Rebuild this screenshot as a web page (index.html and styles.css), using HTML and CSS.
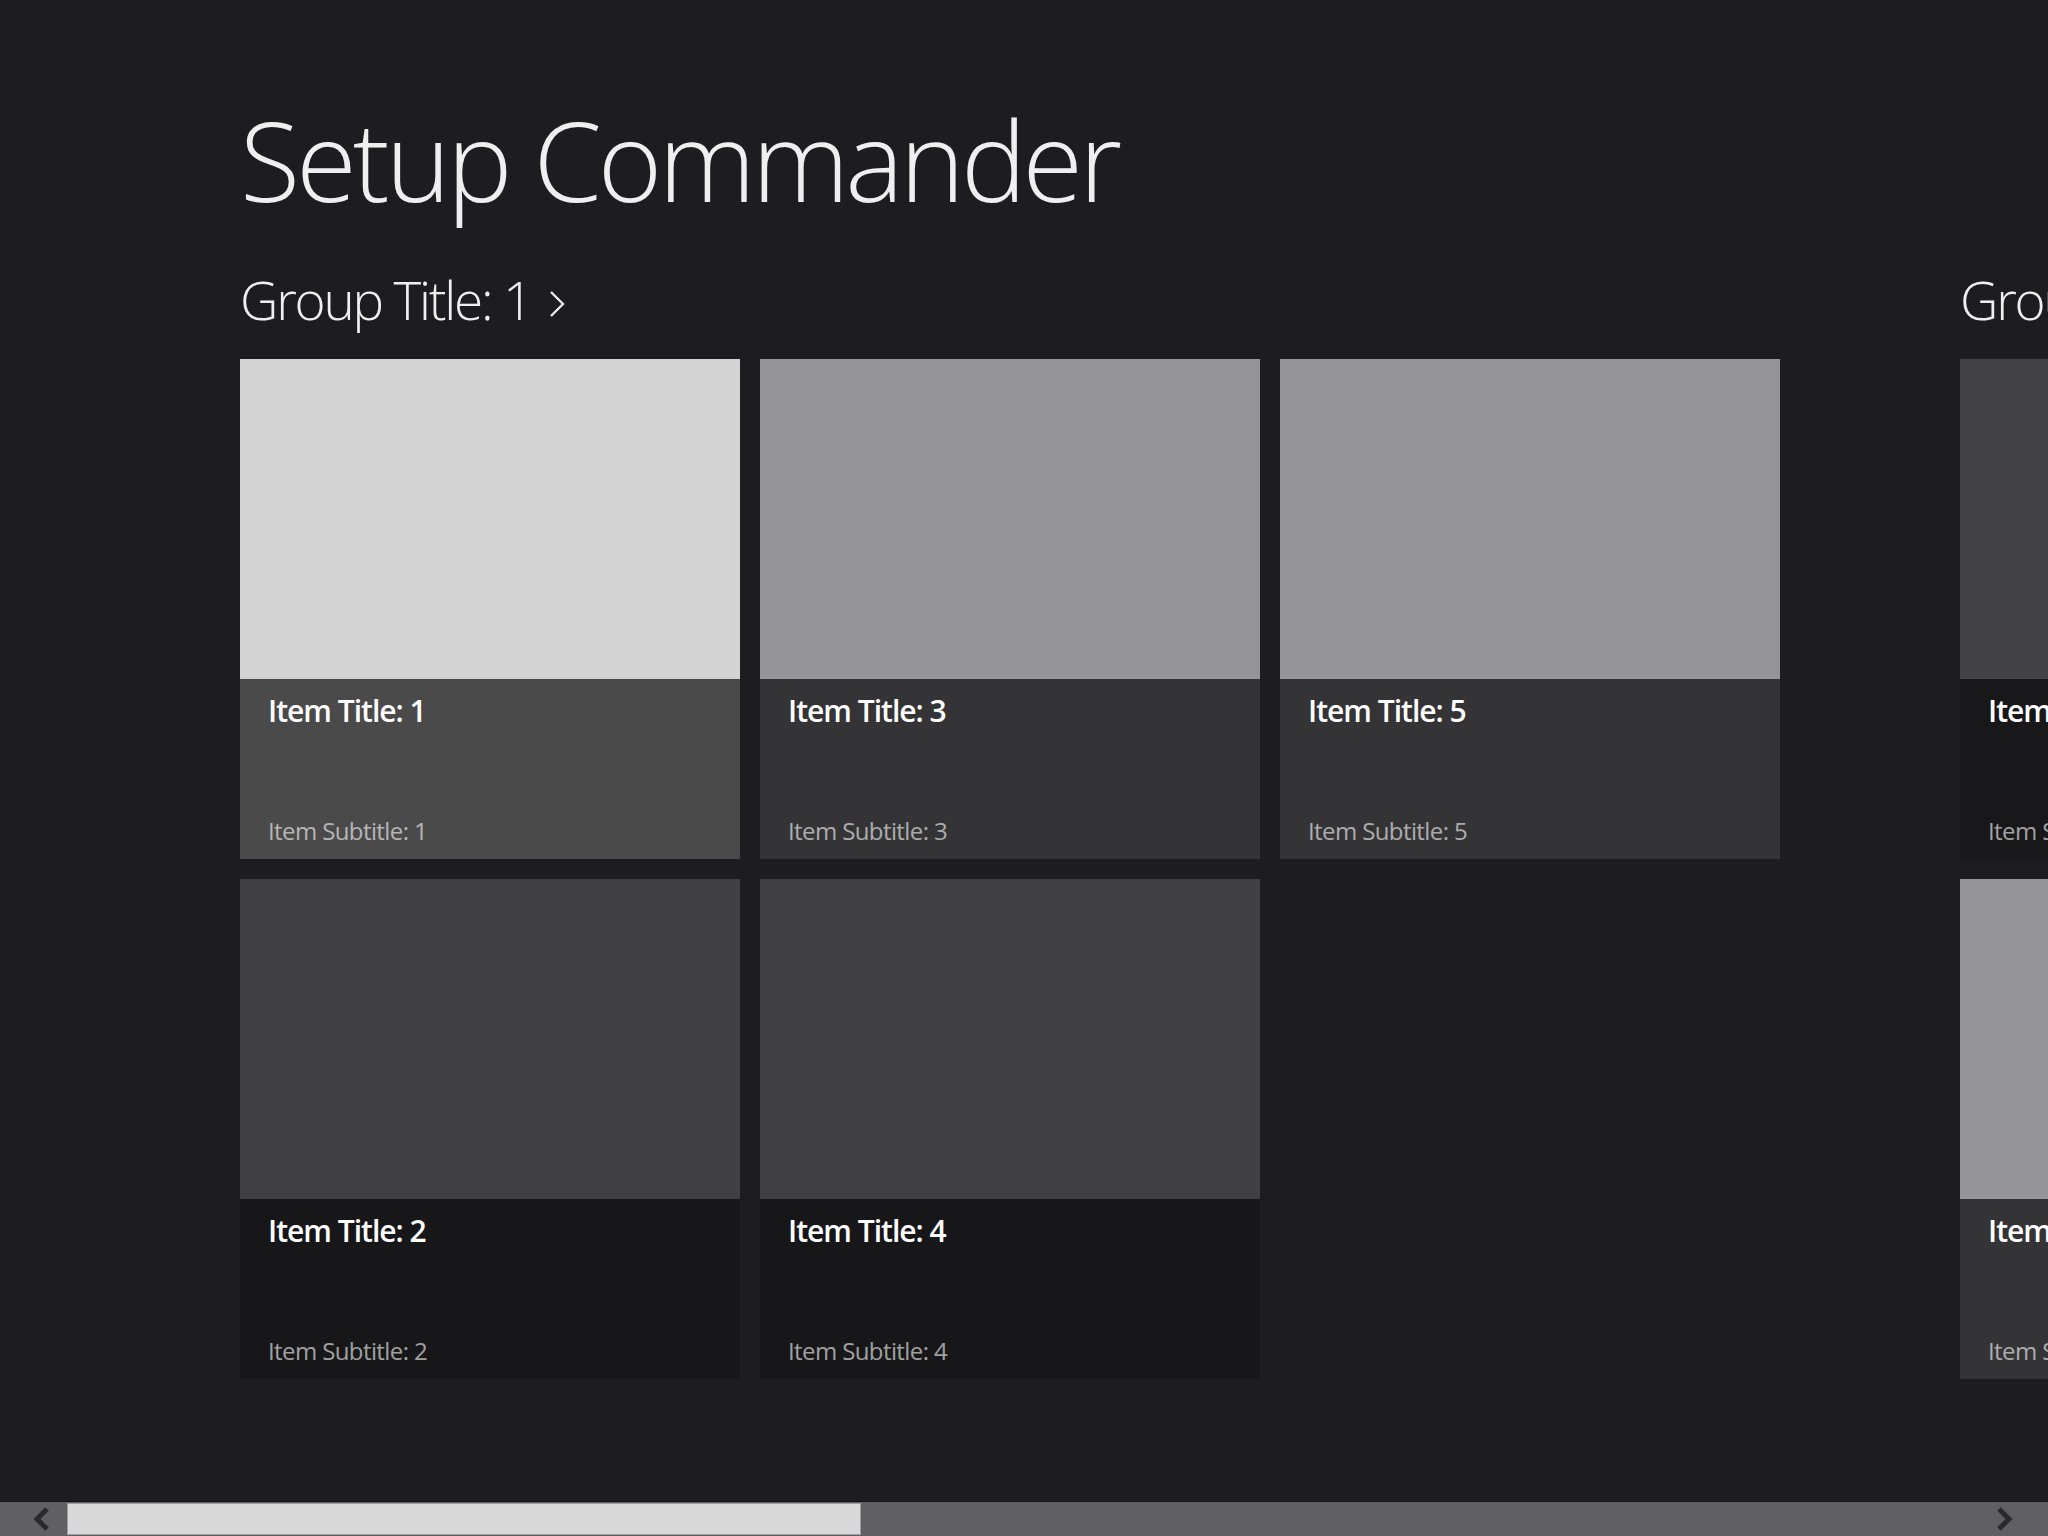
FILE: index.html
```html
<!DOCTYPE html>
<html lang="en">
<head>
<meta charset="utf-8">
<title>Setup Commander</title>
<link rel="stylesheet" href="styles.css">
</head>
<body>
<div class="app">
  <main class="viewport">
    <header class="page-header">
      <h1 class="page-title">Setup Commander</h1>
    </header>
    <section class="hub">
      <div class="group">
        <h2 class="group-header">
          <span class="group-title">Group Title: 1</span>
          <svg class="group-chevron" width="16" height="28" viewBox="0 0 16 28"><polyline points="2,2 14,14 2,26" fill="none" stroke="#ececec" stroke-width="2.4"/></svg>
        </h2>
        <div class="tiles">
          <article class="tile tile-light"><div class="tile-image"></div><div class="tile-overlay"><h3 class="tile-title">Item Title: 1</h3><p class="tile-subtitle">Item Subtitle: 1</p></div></article>
          <article class="tile tile-dark"><div class="tile-image"></div><div class="tile-overlay"><h3 class="tile-title">Item Title: 2</h3><p class="tile-subtitle">Item Subtitle: 2</p></div></article>
          <article class="tile tile-medium"><div class="tile-image"></div><div class="tile-overlay"><h3 class="tile-title">Item Title: 3</h3><p class="tile-subtitle">Item Subtitle: 3</p></div></article>
          <article class="tile tile-dark"><div class="tile-image"></div><div class="tile-overlay"><h3 class="tile-title">Item Title: 4</h3><p class="tile-subtitle">Item Subtitle: 4</p></div></article>
          <article class="tile tile-medium"><div class="tile-image"></div><div class="tile-overlay"><h3 class="tile-title">Item Title: 5</h3><p class="tile-subtitle">Item Subtitle: 5</p></div></article>
        </div>
      </div>
      <div class="group">
        <h2 class="group-header">
          <span class="group-title">Group Title: 2</span>
          <svg class="group-chevron" width="16" height="28" viewBox="0 0 16 28"><polyline points="2,2 14,14 2,26" fill="none" stroke="#ececec" stroke-width="2.4"/></svg>
        </h2>
        <div class="tiles">
          <article class="tile tile-dark2"><div class="tile-image"></div><div class="tile-overlay"><h3 class="tile-title">Item Title: 1</h3><p class="tile-subtitle">Item Subtitle: 1</p></div></article>
          <article class="tile tile-medium"><div class="tile-image"></div><div class="tile-overlay"><h3 class="tile-title">Item Title: 2</h3><p class="tile-subtitle">Item Subtitle: 2</p></div></article>
        </div>
      </div>
    </section>
  </main>
  <div class="scrollbar">
    <div class="sb-arrow sb-left">
      <svg width="20" height="26" viewBox="0 0 20 26"><polyline points="15,3 5,13 15,23" fill="none" stroke="#2a2a2b" stroke-width="5"/></svg>
    </div>
    <div class="sb-track">
      <div class="sb-thumb"></div>
    </div>
    <div class="sb-arrow sb-right">
      <svg width="20" height="26" viewBox="0 0 20 26"><polyline points="5,3 15,13 5,23" fill="none" stroke="#2a2a2b" stroke-width="5"/></svg>
    </div>
  </div>
</div>
</body>
</html>
```

FILE: styles.css
```css
* {
  box-sizing: border-box;
  margin: 0;
  padding: 0;
}

html,
body {
  height: 100%;
}

body {
  background: #1d1d1f;
  color: #ffffff;
  font-family: "Open Sans", "Noto Sans", "Liberation Sans", sans-serif;
  overflow: hidden;
}

.app {
  display: flex;
  flex-direction: column;
  width: 100vw;
  height: 100vh;
}

.viewport {
  flex: 1;
  overflow: hidden;
  display: flex;
  flex-direction: column;
}

.page-header {
  padding: 103px 0 58px 240px;
}

.page-title {
  font-size: 110px;
  font-weight: 300;
  line-height: 112px;
  color: #efefef;
  white-space: nowrap;
  letter-spacing: -3.8px;
}

.hub {
  display: flex;
  gap: 180px;
  padding-left: 240px;
}

.group {
  flex: none;
  display: flex;
  flex-direction: column;
}

.group-header {
  display: flex;
  align-items: flex-end;
  height: 53px;
  margin-bottom: 33px;
  font-size: 53px;
  font-weight: 300;
  line-height: 53px;
  color: #efefef;
  white-space: nowrap;
}

.group-title {
  letter-spacing: -2.2px;
}

.group-chevron {
  margin: 0 0 8px 18px;
  flex: none;
}

.tiles {
  display: grid;
  grid-template-rows: 500px 500px;
  grid-auto-flow: column;
  grid-auto-columns: 500px;
  gap: 20px;
}

.tile {
  display: flex;
  flex-direction: column;
}

.tile-image {
  height: 320px;
}

.tile-overlay {
  flex: 1;
  display: flex;
  flex-direction: column;
  justify-content: space-between;
  padding: 12px 28px 12px 28px;
}

.tile-title {
  font-size: 30px;
  font-weight: 600;
  line-height: 40px;
  color: #ffffff;
  letter-spacing: -1px;
  white-space: nowrap;
}

.tile-subtitle {
  font-size: 24px;
  font-weight: 400;
  line-height: 32px;
  color: rgba(255, 255, 255, 0.6);
  letter-spacing: -0.6px;
  white-space: nowrap;
}

.tile-light .tile-image { background: #d3d3d3; }
.tile-light .tile-overlay { background: #4a4a4a; }

.tile-medium .tile-image { background: #959597; }
.tile-medium .tile-overlay { background: #343436; }

.tile-dark .tile-image { background: #404042; }
.tile-dark .tile-overlay { background: #17171a; }

.tile-dark2 .tile-image { background: #434345; }
.tile-dark2 .tile-overlay { background: #18181a; }

.scrollbar {
  flex: none;
  display: flex;
  height: 35px;
  border-top: 1px solid #141415;
  background: #606062;
}

.sb-arrow {
  flex: none;
  width: 67px;
  display: flex;
  align-items: center;
}

.sb-left {
  justify-content: flex-start;
  padding-left: 32px;
}

.sb-right {
  justify-content: flex-end;
  padding-right: 34px;
}

.sb-track {
  flex: 1;
  display: flex;
  align-items: stretch;
  padding: 1px 0;
}

.sb-thumb {
  width: 794px;
  background: #d9d9d9;
  border: 1px solid #9c9c9e;
}
```
